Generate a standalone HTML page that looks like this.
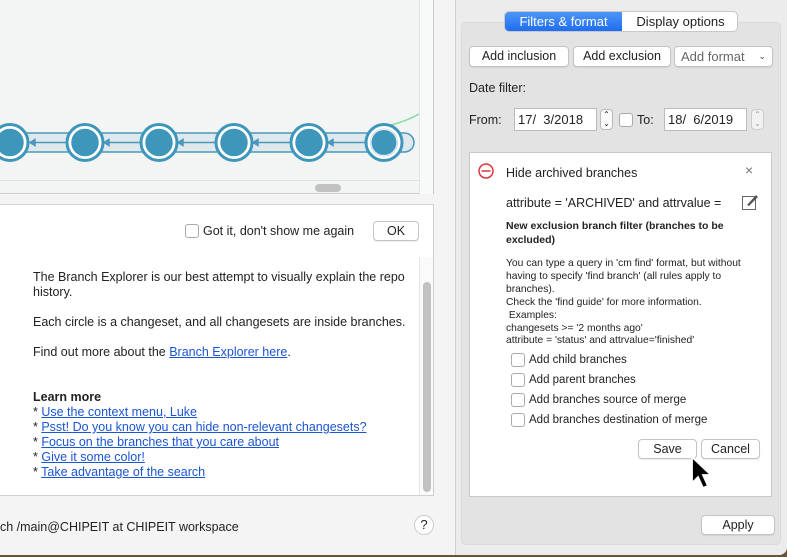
<!DOCTYPE html>
<html><head><meta charset="utf-8"><style>
*{margin:0;padding:0;box-sizing:border-box}
body{width:787px;height:557px;position:relative;overflow:hidden;font-family:"Liberation Sans",sans-serif;font-size:12px;color:#222;background:#6b5335}
.a{position:absolute}
.btn{position:absolute;background:#fff;border:1px solid #c4c4c4;border-radius:4px;font-size:12.5px;text-align:center;color:#222;box-shadow:0 1px 1px rgba(0,0,0,.08)}
.cb{position:absolute;width:14px;height:14px;border:1px solid #aaa;border-radius:3px;background:#fff}
a{color:#1a55d6;text-decoration:underline}
</style></head><body>
<div class="a" style="left:0;top:0;width:787px;height:555px;background:#f4f4f4;border-bottom-right-radius:8px;overflow:hidden">
<div class="a" style="left:0;top:0;width:434px;height:194px;background:#f3f5f5;border-right:1px solid #c8c8c8;border-bottom:1px solid #cfcfcf"></div>
<div class="a" style="left:419px;top:0;width:14px;height:194px;background:#f8f9f9;border-left:1px solid #e4e4e4"></div>
<div class="a" style="left:0;top:180px;width:419px;height:1px;background:#e0e2e2"></div>
<div class="a" style="left:315px;top:184px;width:26px;height:8px;border-radius:4px;background:#c2c2c2"></div>
<svg class="a" style="left:0;top:100px" width="420" height="80">
<path d="M387 26 Q405 22 419 14" stroke="#7fdca0" stroke-width="1.5" fill="none"/>
<rect x="-20" y="33" width="434" height="19" rx="9.5" fill="#dfe8ed" stroke="#4a98bd" stroke-width="1.5"/>
<g stroke="#4a98bd" stroke-width="1.5" fill="#4a98bd">
<line x1="30" y1="42.5" x2="68" y2="42.5"/><path d="M30 42.5 l5 -3 v6z"/>
<line x1="104" y1="42.5" x2="141" y2="42.5"/><path d="M104 42.5 l5 -3 v6z"/>
<line x1="178" y1="42.5" x2="216" y2="42.5"/><path d="M178 42.5 l5 -3 v6z"/>
<line x1="253" y1="42.5" x2="291" y2="42.5"/><path d="M253 42.5 l5 -3 v6z"/>
<line x1="328" y1="42.5" x2="366" y2="42.5"/><path d="M328 42.5 l5 -3 v6z"/>
</g>
<g fill="#3f96bb" stroke="#fff" stroke-width="3.5">
<circle cx="10" cy="42.5" r="15.5"/><circle cx="85" cy="42.5" r="15.5"/><circle cx="159" cy="42.5" r="15.5"/><circle cx="234" cy="42.5" r="15.5"/><circle cx="309" cy="42.5" r="15.5"/><circle cx="384" cy="42.5" r="15.5"/>
</g>
<g fill="none" stroke="#3f96bb" stroke-width="3">
<circle cx="10" cy="42.5" r="18"/><circle cx="85" cy="42.5" r="18"/><circle cx="159" cy="42.5" r="18"/><circle cx="234" cy="42.5" r="18"/><circle cx="309" cy="42.5" r="18"/><circle cx="384" cy="42.5" r="18"/>
</g>
<circle cx="384" cy="42.5" r="13" fill="none" stroke="#fff" stroke-width="1"/>
</svg>
<div class="a" style="left:0;top:204px;width:434px;height:292px;background:#fff;border-top:1px solid #d6d6d6;border-right:1px solid #cfcfcf;border-bottom:1px solid #cfcfcf"></div>
<div class="cb" style="left:185px;top:224px"></div>
<div class="a" style="left:203px;top:224px;font-size:12.5px">Got it, don't show me again</div>
<div class="btn" style="left:373px;top:221px;width:46px;height:20px;line-height:18px">OK</div>
<div class="a" style="left:419px;top:257px;width:14px;height:238px;background:#fafafa;border-left:1px solid #e6e6e6"></div>
<div class="a" style="left:423px;top:282px;width:8px;height:210px;border-radius:4px;background:#c1c1c1"></div>
<div class="a" style="left:33px;top:270px;font-size:12.5px;line-height:15px;width:390px">The Branch Explorer is our best attempt to visually explain the repo history.<br><br>Each circle is a changeset, and all changesets are inside branches.<br><br>Find out more about the <a>Branch Explorer here</a>.<br><br><br><b>Learn more</b><br>* <a>Use the context menu, Luke</a><br>* <a>Psst! Do you know you can hide non-relevant changesets?</a><br>* <a>Focus on the branches that you care about</a><br>* <a>Give it some color!</a><br>* <a>Take advantage of the search</a></div>
<div class="a" style="left:0;top:520px;font-size:12.5px;white-space:nowrap">ch /main@CHIPEIT at CHIPEIT workspace</div>
<div class="a" style="left:414px;top:515px;width:20px;height:20px;border-radius:50%;background:#fff;border:1px solid #ccc;text-align:center;line-height:18px;font-size:13px">?</div>
<div class="a" style="left:455px;top:0;width:332px;height:555px;background:#ececec;border-left:1px solid #d0d0d0"></div>
<div class="a" style="left:461px;top:22px;width:320px;height:523px;background:#e3e3e3;border:1px solid #dadada;border-radius:5px"></div>
<div class="a" style="left:504px;top:11px;width:234px;height:21px;border:1px solid #c8c8c8;border-radius:5px;background:#fff;overflow:hidden;font-size:13px">
<div class="a" style="left:0;top:0;width:117px;height:19px;background:linear-gradient(#4d95f8,#1f6ef2);color:#fff;text-align:center;line-height:19px">Filters &amp; format</div>
<div class="a" style="left:117px;top:0;width:117px;height:19px;text-align:center;line-height:19px">Display options</div></div>
<div class="btn" style="left:469px;top:46px;width:100px;height:21px;line-height:19px">Add inclusion</div>
<div class="btn" style="left:573px;top:46px;width:98px;height:21px;line-height:19px">Add exclusion</div>
<div class="btn" style="left:674px;top:46px;width:99px;height:21px;line-height:19px;text-align:left;padding-left:6px;color:#666;font-size:13px">Add format<span style="position:absolute;right:6px;top:0;font-size:9px;color:#444">&#8964;</span></div>
<div class="a" style="left:469px;top:81px;font-size:12.5px">Date filter:</div>
<div class="a" style="left:469px;top:113px;font-size:12.5px">From:</div>
<div class="a" style="left:514px;top:108px;width:83px;height:23px;background:#fff;border:1px solid #bbb;font-size:13px;line-height:21px;padding-left:3px">17/&nbsp; 3/2018</div>
<div class="a" style="left:600px;top:109px;width:13px;height:21px;border:1px solid #bbb;border-radius:4px;background:#fafafa;font-size:8px;text-align:center;line-height:9px">&#8963;<br>&#8964;</div>
<div class="cb" style="left:619px;top:113px"></div>
<div class="a" style="left:637px;top:113px;font-size:12.5px">To:</div>
<div class="a" style="left:664px;top:108px;width:83px;height:23px;background:#fff;border:1px solid #bbb;font-size:13px;line-height:21px;padding-left:3px">18/&nbsp; 6/2019</div>
<div class="a" style="left:751px;top:109px;width:13px;height:21px;border:1px solid #ccc;border-radius:4px;background:#f2f2f2;font-size:8px;text-align:center;line-height:9px;color:#999">&#8963;<br>&#8964;</div>
<div class="a" style="left:469px;top:152px;width:303px;height:345px;background:#fff;border:1px solid #c9c9c9"></div>
<svg class="a" style="left:477px;top:162px" width="18" height="18"><circle cx="9" cy="9" r="7" fill="none" stroke="#d9363e" stroke-width="1.5"/><line x1="4.5" y1="9" x2="13.5" y2="9" stroke="#d9363e" stroke-width="1.5"/></svg>
<div class="a" style="left:506px;top:166px;font-size:12.5px">Hide archived branches</div>
<div class="a" style="left:745px;top:162px;font-size:14px;color:#777">×</div>
<div class="a" style="left:506px;top:196px;font-size:12.5px">attribute = 'ARCHIVED' and attrvalue =</div>
<svg class="a" style="left:741px;top:193px" width="18" height="18"><rect x="1.5" y="3.5" width="13" height="13" fill="none" stroke="#666" stroke-width="1"/><path d="M6 12 L15 2 L17 4 L8 13 Z" fill="#555"/></svg>
<div class="a" style="left:506px;top:220px;font-size:10.5px;font-weight:bold;line-height:13.5px;width:230px">New exclusion branch filter (branches to be excluded)</div>
<div class="a" style="left:506px;top:258px;font-size:10.3px;line-height:12.9px;width:262px">You can type a query in 'cm find' format, but without having to specify 'find branch' (all rules apply to branches).<br>Check the 'find guide' for more information.<br>&nbsp;Examples:<br>changesets &gt;= '2 months ago'<br>attribute = 'status' and attrvalue='finished'</div>
<div class="cb" style="left:511px;top:353px"></div><div class="a" style="left:529px;top:354px;font-size:11.5px">Add child branches</div>
<div class="cb" style="left:511px;top:373px"></div><div class="a" style="left:529px;top:374px;font-size:11.5px">Add parent branches</div>
<div class="cb" style="left:511px;top:393px"></div><div class="a" style="left:529px;top:394px;font-size:11.5px">Add branches source of merge</div>
<div class="cb" style="left:511px;top:413px"></div><div class="a" style="left:529px;top:414px;font-size:11.5px">Add branches destination of merge</div>
<div class="btn" style="left:638px;top:439px;width:59px;height:20px;line-height:18px">Save</div>
<div class="btn" style="left:701px;top:439px;width:59px;height:20px;line-height:18px">Cancel</div>
<svg class="a" style="left:690px;top:455px" width="30" height="40"><path d="M2 2 L2 28 L8 22 L13 33 L18 31 L13 20 L21 20 Z" fill="#000" stroke="#fff" stroke-width="1.8"/></svg>
<div class="btn" style="left:701px;top:515px;width:74px;height:20px;line-height:18px">Apply</div>
</div>
</body></html>
